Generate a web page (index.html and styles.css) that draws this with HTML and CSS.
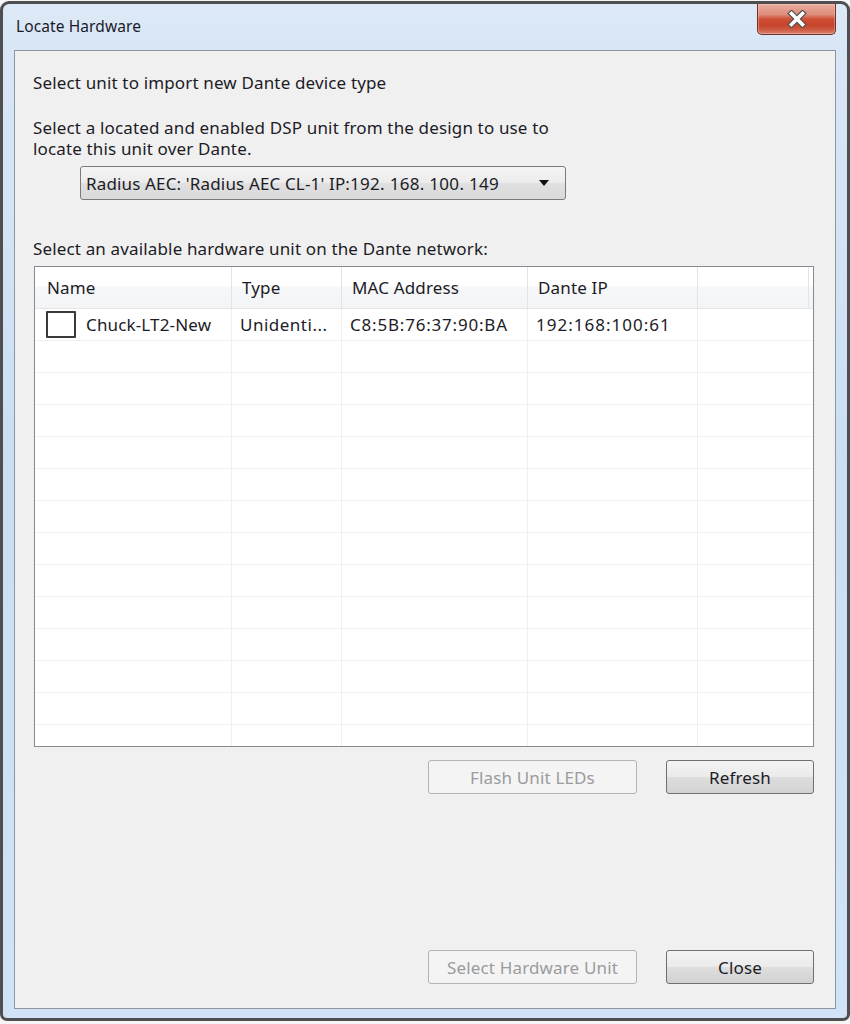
FILE: index.html
```html
<!DOCTYPE html>
<html>
<head>
<meta charset="utf-8">
<title>Locate Hardware</title>
<link rel="stylesheet" href="styles.css">
</head>
<body>
<div class="window">
  <div class="titlebar">
    <span class="title">Locate Hardware</span>
    <button class="close-btn" aria-label="Close">
      <svg width="20" height="18" viewBox="0 0 20 18">
        <path d="M4.5 3.5 L15.5 14.5 M15.5 3.5 L4.5 14.5" stroke="#505050" stroke-width="6" stroke-linecap="square" fill="none"/>
        <path d="M4.5 3.5 L15.5 14.5 M15.5 3.5 L4.5 14.5" stroke="#ffffff" stroke-width="3.6" stroke-linecap="square" fill="none"/>
      </svg>
    </button>
  </div>
  <div class="client">
    <p class="label">Select unit to import new Dante device type</p>
    <p class="label desc">Select a located and enabled DSP unit from the design to use to<br>locate this unit over Dante.</p>
    <div class="combo">
      <span class="combo-text">Radius AEC: 'Radius AEC CL-1' IP:<span class="num">192. 168. 100. 149</span></span>
      <span class="combo-arrow"></span>
    </div>
    <p class="label avail">Select an available hardware unit on the Dante network:</p>
    <div class="list">
      <div class="row header">
        <div class="cell first">Name</div>
        <div class="cell">Type</div>
        <div class="cell">MAC Address</div>
        <div class="cell">Dante IP</div>
        <div class="cell"></div>
      </div>
      <div class="body">
        <div class="row">
          <div class="cell first"><span class="check"></span>Chuck-LT2-New</div>
          <div class="cell type">Unidenti...</div>
          <div class="cell mac">C8:5B:76:37:90:BA</div>
          <div class="cell ip">192:168:100:61</div>
          <div class="cell"></div>
        </div>
        <div class="row"><div class="cell"></div><div class="cell"></div><div class="cell"></div><div class="cell"></div><div class="cell"></div></div>
        <div class="row"><div class="cell"></div><div class="cell"></div><div class="cell"></div><div class="cell"></div><div class="cell"></div></div>
        <div class="row"><div class="cell"></div><div class="cell"></div><div class="cell"></div><div class="cell"></div><div class="cell"></div></div>
        <div class="row"><div class="cell"></div><div class="cell"></div><div class="cell"></div><div class="cell"></div><div class="cell"></div></div>
        <div class="row"><div class="cell"></div><div class="cell"></div><div class="cell"></div><div class="cell"></div><div class="cell"></div></div>
        <div class="row"><div class="cell"></div><div class="cell"></div><div class="cell"></div><div class="cell"></div><div class="cell"></div></div>
        <div class="row"><div class="cell"></div><div class="cell"></div><div class="cell"></div><div class="cell"></div><div class="cell"></div></div>
        <div class="row"><div class="cell"></div><div class="cell"></div><div class="cell"></div><div class="cell"></div><div class="cell"></div></div>
        <div class="row"><div class="cell"></div><div class="cell"></div><div class="cell"></div><div class="cell"></div><div class="cell"></div></div>
        <div class="row"><div class="cell"></div><div class="cell"></div><div class="cell"></div><div class="cell"></div><div class="cell"></div></div>
        <div class="row"><div class="cell"></div><div class="cell"></div><div class="cell"></div><div class="cell"></div><div class="cell"></div></div>
        <div class="row"><div class="cell"></div><div class="cell"></div><div class="cell"></div><div class="cell"></div><div class="cell"></div></div>
        <div class="row"><div class="cell"></div><div class="cell"></div><div class="cell"></div><div class="cell"></div><div class="cell"></div></div>
      </div>
    </div>
    <div class="btn-row">
      <button class="btn wide" disabled>Flash Unit LEDs</button>
      <button class="btn">Refresh</button>
    </div>
    <div class="btn-row bottom">
      <button class="btn wide" disabled>Select Hardware Unit</button>
      <button class="btn">Close</button>
    </div>
  </div>
</div>
</body>
</html>
```
FILE: styles.css
```css
html, body {
  margin: 0;
  padding: 0;
}

body {
  background: #f6f6f6;
  font-family: "Noto Sans", "Open Sans", sans-serif;
  color: #1c1c26;
  letter-spacing: 0.15px;
}

.window {
  box-sizing: border-box;
  width: 850px;
  height: 1020px;
  margin-top: 1px;
  border: 3px solid #4f4f52;
  border-radius: 9px 9px 7px 7px;
  background: linear-gradient(to bottom, #dde9f6 0%, #d8e6f6 4%, #d3e3f5 25%, #cadef4 45%, #d0e3f8 100%);
  padding: 0 11px 9px 11px;
  display: flex;
  flex-direction: column;
}

.titlebar {
  height: 46px;
  flex: none;
  display: flex;
  align-items: center;
  justify-content: space-between;
  padding-left: 2px;
}

.title {
  font-size: 15.5px;
  letter-spacing: 0.1px;
  color: #1a1a28;
  margin-top: -2px;
}

.close-btn {
  align-self: flex-start;
  width: 79px;
  height: 31px;
  margin: 0;
  padding: 0;
  border: 1px solid #6e3027;
  border-top: none;
  border-radius: 0 0 5px 5px;
  background: linear-gradient(to bottom, #e9ad9f 0%, #de8d7b 35%, #cf4f37 50%, #c7442b 70%, #cc5a42 85%, #d9836f 100%);
  display: flex;
  align-items: center;
  justify-content: center;
  box-shadow: inset 0 0 0 1px rgba(255, 220, 210, 0.35);
}

.client {
  flex: 1;
  box-sizing: border-box;
  border: 1px solid #8f969f;
  background: #f0f0f0;
  padding: 21px 21px 24px 18px;
  display: flex;
  flex-direction: column;
}

.label {
  margin: 0;
  font-size: 17px;
  line-height: 21px;
  white-space: nowrap;
}

.desc {
  margin-top: 24px;
}

.combo {
  box-sizing: border-box;
  margin-top: 7px;
  margin-left: 47px;
  width: 486px;
  height: 34px;
  border: 1px solid #7a7a7a;
  border-radius: 3px;
  background: linear-gradient(to bottom, #f4f4f4 0%, #ececec 48%, #e0e0e0 52%, #d9d9d9 100%);
  display: flex;
  align-items: center;
  justify-content: space-between;
  padding: 0 16px 0 5px;
  font-size: 17px;
  white-space: nowrap;
}

.combo-text .num {
  letter-spacing: 0.3px;
}

.combo-arrow {
  width: 0;
  height: 0;
  border-left: 5px solid transparent;
  border-right: 5px solid transparent;
  border-top: 6px solid #111;
}

.avail {
  margin-top: 38px;
}

.list {
  box-sizing: border-box;
  margin-top: 7px;
  margin-left: 1px;
  height: 481px;
  border: 1px solid #868b93;
  background: #fff;
  overflow: hidden;
  flex: none;
}

.row {
  display: grid;
  grid-template-columns: 197px 110px 186px 170px 1fr;
  box-sizing: border-box;
  height: 32px;
  border-bottom: 1px solid #efefef;
  font-size: 17px;
}

.row .cell {
  box-sizing: border-box;
  border-right: 1px solid #efefef;
  display: flex;
  align-items: center;
  padding-left: 8px;
  white-space: nowrap;
  overflow: hidden;
}

.row .cell:last-child {
  border-right: none;
}

.row .cell.first {
  padding-left: 11px;
}

.row.header {
  height: 42px;
  background: linear-gradient(to bottom, #ffffff 0%, #ffffff 45%, #f6f7f8 50%, #f3f4f6 100%);
  border-bottom: 1px solid #e4e5e7;
}

.row.header .cell {
  padding-left: 10px;
  border-right: 1px solid #e3e4e6;
}

.row.header .cell.first {
  padding-left: 12px;
}

.row.header .cell:last-child {
  margin-right: 4px;
}

.type {
  letter-spacing: 0.5px;
}

.mac {
  padding-left: 9px;
  letter-spacing: 0.8px;
}

.ip {
  padding-left: 10px;
  letter-spacing: 1px;
}

.check {
  box-sizing: border-box;
  width: 30px;
  height: 27px;
  border: 2px solid #3a3a3a;
  border-radius: 1px;
  background: #fff;
  margin-right: 10px;
  flex: none;
}

.btn-row {
  display: flex;
  justify-content: flex-end;
  gap: 29px;
  margin-top: 13px;
}

.btn-row.bottom {
  margin-top: auto;
}

.btn {
  box-sizing: border-box;
  width: 148px;
  height: 34px;
  margin: 0;
  padding: 0;
  border: 1px solid #707070;
  border-radius: 3px;
  background: linear-gradient(to bottom, #f3f3f3 0%, #ebebeb 48%, #dddddd 52%, #d2d2d2 100%);
  font-family: "Noto Sans", "Open Sans", sans-serif;
  font-size: 17px;
  letter-spacing: 0.15px;
  color: #1c1c26;
}

.btn.wide {
  width: 209px;
}

.btn:disabled {
  border-color: #b0b4b8;
  background: #f4f4f4;
  color: #9b9b9e;
}
```
